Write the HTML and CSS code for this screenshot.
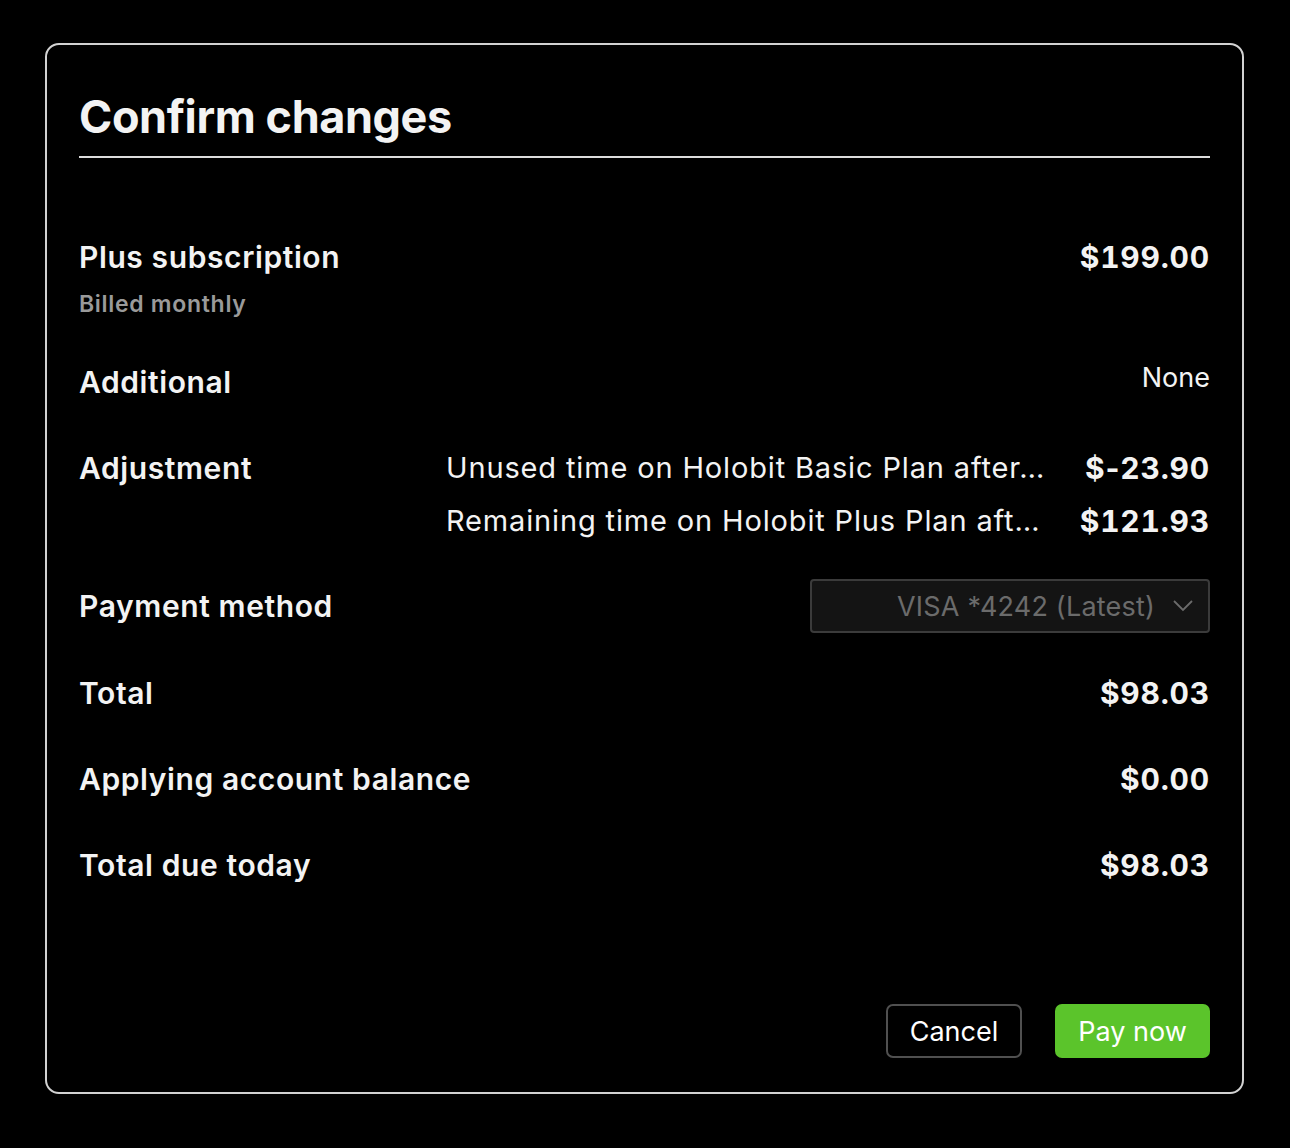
FILE: index.html
```html
<!DOCTYPE html>
<html lang="en">
<head>
    <meta name="viewport" content="width=device-width, initial-scale=1.0">
    <title>Confirm changes</title>
    <link rel="stylesheet" href="styles.css">
</head>
<body>
    <div class="modal">
        <h1 class="modal-title">Confirm changes</h1>

        <div class="summary">
            <div class="row row-plan">
                <div class="label-group">
                    <div class="label">Plus subscription</div>
                    <div class="sub-label">Billed monthly</div>
                </div>
                <div class="amount">$199.00</div>
            </div>

            <div class="row">
                <div class="label">Additional</div>
                <div class="value">None</div>
            </div>

            <div class="row row-adjust">
                <div class="label">Adjustment</div>
                <div class="adjust-lines">
                    <div class="adjust-line">
                        <span class="adjust-desc">Unused time on Holobit Basic Plan after…</span>
                        <span class="amount">$<span class="minus">-</span>23.90</span>
                    </div>
                    <div class="adjust-line">
                        <span class="adjust-desc">Remaining time on Holobit Plus Plan aft…</span>
                        <span class="amount">$121.93</span>
                    </div>
                </div>
            </div>

            <div class="row row-payment">
                <div class="label">Payment method</div>
                <div class="select">
                    <span>VISA *4242 (Latest)</span>
                    <svg class="chevron" width="20" height="12" viewBox="0 0 20 12">
                        <polyline points="1,1 10,10 19,1" fill="none" stroke="#6b6b6b" stroke-width="1.8"/>
                    </svg>
                </div>
            </div>

            <div class="row">
                <div class="label">Total</div>
                <div class="amount">$98.03</div>
            </div>

            <div class="row">
                <div class="label">Applying account balance</div>
                <div class="amount">$0.00</div>
            </div>

            <div class="row">
                <div class="label">Total due today</div>
                <div class="amount">$98.03</div>
            </div>
        </div>

        <div class="actions">
            <button class="btn btn-cancel">Cancel</button>
            <button class="btn btn-pay">Pay now</button>
        </div>
    </div>
</body>
</html>
```

FILE: styles.css
```css
* {
    margin: 0;
    padding: 0;
    box-sizing: border-box;
    font-family: Inter, "Noto Sans", sans-serif;
}

body {
    background-color: #000;
    color: #f3f3f3;
    min-height: 100vh;
    padding: 43px 0 0 45px;
}

.modal {
    width: 1199px;
    padding: 44px 32px 34px;
    border: 2px solid #d2d2d2;
    border-radius: 14px;
    background: #000;
}

.modal-title {
    font-size: 45px;
    font-weight: 700;
    line-height: 56px;
    letter-spacing: -0.4px;
    padding-bottom: 11px;
    border-bottom: 2px solid #dcdcdc;
}

.summary {
    display: flex;
    flex-direction: column;
    gap: 40px;
    margin-top: 76px;
}

.row {
    display: flex;
    justify-content: space-between;
    align-items: center;
}

.row-plan,
.row-adjust {
    align-items: flex-start;
}

.label {
    font-size: 30px;
    font-weight: 600;
    line-height: 46px;
    letter-spacing: 0.6px;
}

.sub-label {
    font-size: 23px;
    font-weight: 600;
    line-height: 30px;
    letter-spacing: 0.7px;
    color: #9a9a9a;
    margin-top: 9px;
}

.amount {
    font-size: 30px;
    font-weight: 700;
    line-height: 46px;
    letter-spacing: 0.8px;
    font-variant-numeric: tabular-nums;
}

.minus {
    font-variant-numeric: normal;
    letter-spacing: 0.8px;
}

.value {
    font-size: 27px;
    font-weight: 400;
    line-height: 38px;
    align-self: flex-start;
}

.row-adjust .label {
    width: 367px;
    flex-shrink: 0;
}

.adjust-lines {
    flex: 1;
    display: flex;
    flex-direction: column;
    gap: 7px;
}

.adjust-line {
    display: flex;
    justify-content: space-between;
    align-items: center;
    gap: 30px;
}

.adjust-desc {
    font-size: 29px;
    font-weight: 400;
    line-height: 46px;
    letter-spacing: 0.85px;
    white-space: nowrap;
}

.row-payment {
    margin-top: -5px;
    margin-bottom: -3px;
}

.select {
    width: 400px;
    height: 54px;
    display: flex;
    align-items: center;
    justify-content: flex-end;
    gap: 18px;
    padding: 0 15px;
    background: #141414;
    border: 2px solid #3b3b3b;
    border-radius: 4px;
    color: #6b6b6b;
    font-size: 27px;
    letter-spacing: 0.2px;
}

.chevron {
    display: block;
}

.actions {
    display: flex;
    justify-content: flex-end;
    gap: 33px;
    margin-top: 116px;
}

.btn {
    height: 54px;
    padding: 0 20px;
    font-size: 27px;
    border-radius: 7px;
    cursor: pointer;
    color: #fff;
}

.btn-cancel {
    width: 136px;
    background: #000;
    border: 2px solid #505050;
}

.btn-pay {
    width: 155px;
    background: #5bc42b;
    border: none;
}
```
